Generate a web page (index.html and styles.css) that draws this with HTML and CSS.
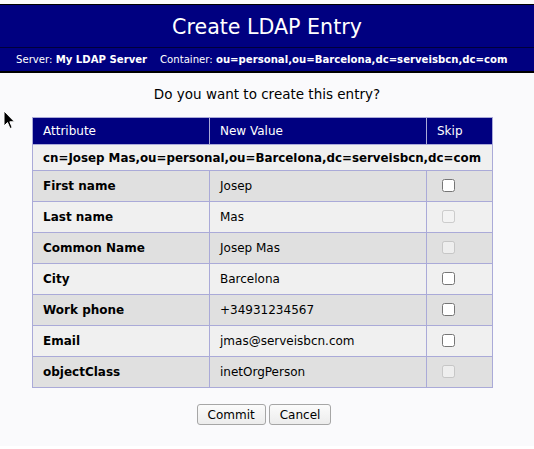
FILE: index.html
```html
<!DOCTYPE html>
<html>
<head>
<meta charset="utf-8">
<link rel="stylesheet" href="styles.css">
</head>
<body>
<div class="page">
  <div class="head">
    <div class="title">Create LDAP Entry</div>
    <div class="sub">Server: <b>My LDAP Server</b>&nbsp;&nbsp;&nbsp; Container: <b>ou=personal,ou=Barcelona,dc=serveisbcn,dc=com</b></div>
  </div>
  <div class="question">Do you want to create this entry?</div>
  <table class="confirm">
    <colgroup><col class="c1"><col class="c2"><col class="c3"></colgroup>
    <thead>
      <tr><th>Attribute</th><th>New Value</th><th>Skip</th></tr>
    </thead>
    <tbody>
      <tr class="dn light"><td colspan="3">cn=Josep Mas,ou=personal,ou=Barcelona,dc=serveisbcn,dc=com</td></tr>
      <tr class="dark"><td class="attr">First name</td><td>Josep</td><td><input type="checkbox"></td></tr>
      <tr class="light"><td class="attr">Last name</td><td>Mas</td><td><input type="checkbox" disabled></td></tr>
      <tr class="dark"><td class="attr">Common Name</td><td>Josep Mas</td><td><input type="checkbox" disabled></td></tr>
      <tr class="light"><td class="attr">City</td><td>Barcelona</td><td><input type="checkbox"></td></tr>
      <tr class="dark"><td class="attr">Work phone</td><td>+34931234567</td><td><input type="checkbox"></td></tr>
      <tr class="light"><td class="attr">Email</td><td>jmas@serveisbcn.com</td><td><input type="checkbox"></td></tr>
      <tr class="dark"><td class="attr">objectClass</td><td>inetOrgPerson</td><td><input type="checkbox" disabled></td></tr>
    </tbody>
  </table>
  <div class="buttons">
    <button class="btn">Commit</button>
    <button class="btn">Cancel</button>
  </div>
</div>
<svg class="cursor" width="14" height="22" viewBox="0 0 14 22"><path d="M1 1 L1 16 L4.5 12.5 L7 18.5 L9.2 17.6 L6.8 11.8 L11.5 11.8 Z" fill="#000" stroke="#fff" stroke-width="1"/></svg>
</body>
</html>
```

FILE: styles.css
```css
html, body {
  margin: 0;
  padding: 0;
  background: #ffffff;
}
body {
  font-family: "DejaVu Sans", sans-serif;
  position: relative;
}
.page {
  height: 446px;
  background: #fafafc;
  padding-top: 4px;
  box-sizing: border-box;
}
.head {
  background: #000080;
  color: #ffffff;
  border-top: 1px solid #000;
  border-bottom: 2px solid #000;
}
.title {
  font-size: 20.6px;
  text-align: center;
  height: 42px;
  line-height: 45px;
  border-bottom: 1px solid #00003a;
}
.sub {
  font-size: 10.15px;
  height: 23px;
  line-height: 23px;
  padding-left: 16px;
  white-space: nowrap;
}
.question {
  font-size: 13.5px;
  text-align: center;
  margin-top: 13px;
  color: #000;
}
.confirm {
  border-collapse: collapse;
  table-layout: fixed;
  margin: 15px 0 0 32px;
  width: 460px;
  font-size: 12px;
  border: 1px solid #aaaad8;
}
.c1 { width: 177px; }
.c2 { width: 217px; }
.c3 { width: 66px; }
.confirm th {
  background: #000080;
  color: #fff;
  font-weight: normal;
  text-align: left;
  height: 26px;
  padding: 0 10px;
  border: 1px solid #aaaad8;
}
.confirm td {
  height: 29px;
  padding: 0 10px 1px;
  border: 1px solid #aaaad8;
  color: #000;
  white-space: nowrap;
}
.confirm tr.dn td {
  height: 25px;
  padding-bottom: 0;
  font-weight: bold;
  font-size: 11.85px;
}
.dark td { background: #e0e0e0; }
.light td { background: #f0f0f0; }
.attr { font-weight: bold; }
.confirm input {
  margin: 3px 3px 3px 5px;
  vertical-align: middle;
}
.buttons {
  display: flex;
  justify-content: center;
  gap: 3px;
  margin-top: 16px;
  padding-right: 6px;
}
.btn {
  font-family: "DejaVu Sans", sans-serif;
  font-size: 12px;
  height: 21px;
  padding: 0 10px;
  background: linear-gradient(#fbfbfb, #ececec);
  border: 1px solid #a6a6a6;
  border-radius: 3px;
  color: #000;
}
.cursor {
  position: absolute;
  left: 3px;
  top: 110px;
}
```
